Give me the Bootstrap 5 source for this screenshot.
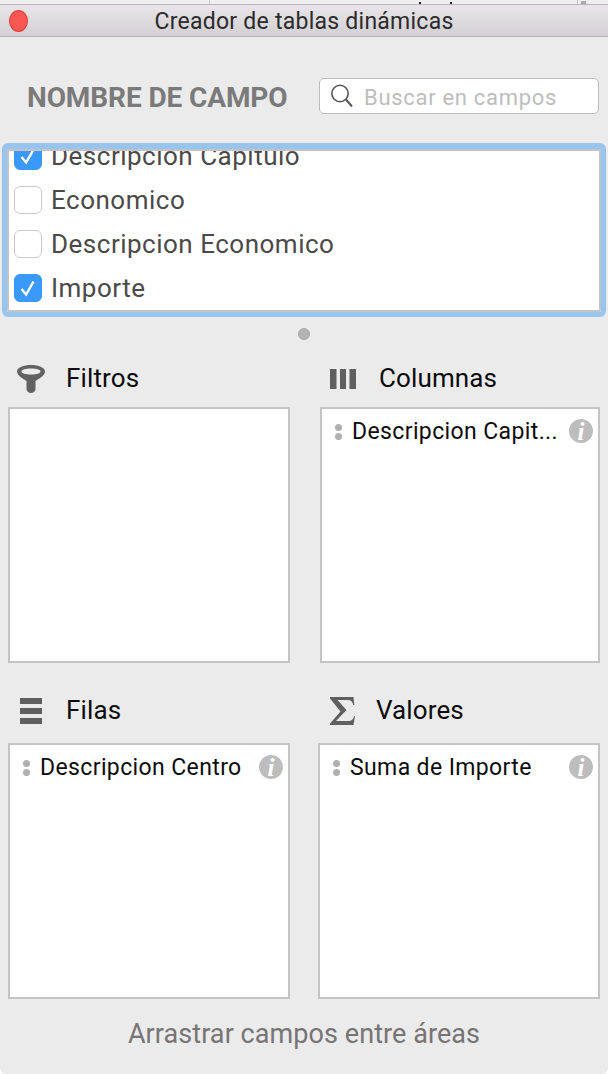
<!DOCTYPE html>
<html lang="es">
<head>
<meta charset="utf-8">
<title>Creador de tablas dinámicas</title>
<link href="https://cdn.jsdelivr.net/npm/bootstrap@5.3.0/dist/css/bootstrap.min.css" rel="stylesheet">
<style>
html,body{width:608px;height:1074px;overflow:hidden;background:#fff;margin:0}
body{font-family:Roboto,"Liberation Sans",sans-serif;-webkit-font-smoothing:antialiased}
.strip{height:5px;border-bottom:1px solid #b5b5b5;background-color:#efefef;background-repeat:no-repeat;
background-image:linear-gradient(#c8c8c8,#c8c8c8),linear-gradient(#c8c8c8,#c8c8c8),linear-gradient(#555,#555),linear-gradient(#222,#222),linear-gradient(#222,#222),linear-gradient(#aaa,#aaa);
background-size:1px 4px,1px 4px,1px 4px,2px 2px,2px 2px,5px 3px;
background-position:209px 0,577px 0,577px 0,419px 2px,450px 2px,581px 1px}
.win{height:1069px;background:#ebebeb;border-radius:0 0 6px 6px}
.tbar{height:32px;background:linear-gradient(#e8e6e8,#d2d0d2);border-bottom:1px solid #b1b1b1;position:relative;font-size:23px;color:#2c2a2c;line-height:33px;letter-spacing:.25px}
.close-dot{position:absolute;left:9px;top:5px;width:19px;height:22px;border-radius:50%;background:#fc5753;border:1px solid #df3f3c}
.head{height:106px;padding:41px 9px 0 27px}
.fname{font-size:28px;font-weight:700;color:#7b7a7b;letter-spacing:-.1px;line-height:38px;padding-top:1px}
.sbox{width:280px;height:36px;background:#fff;border:1px solid #bcbcbc;border-radius:5px;padding-left:10px;gap:10px;font-size:22px;color:#bdbdbd;letter-spacing:.7px}
.stext{padding-top:3px}
.flist{height:174px;margin:0 2px;border:5px solid #9ac4f0;border-top-width:6px;border-radius:6px;overflow:hidden}
.flist-in{height:100%;background:#fff;border:2px solid #c4c4c4;overflow:hidden;padding-left:5px}
.frow{height:44px;gap:9px;font-size:26px;color:#4b4949;letter-spacing:.5px;line-height:44px;white-space:nowrap}
.frow:first-child{margin-top:-17px}
.frow .form-check-input{width:28px;height:28px;margin:0;flex:none;border-radius:6px;border:1.5px solid #cacaca;background-color:#fff;box-shadow:none}
.frow .form-check-input:checked{background-color:#3b99fc;border-color:#3b99fc;background-size:100%;background-image:url("data:image/svg+xml,%3csvg xmlns='http://www.w3.org/2000/svg' viewBox='0 0 28 28'%3e%3cpath fill='none' stroke='%23fff' stroke-width='2.6' d='M7 15l5 6 8-14'/%3e%3c/svg%3e")}
.grip{height:34px}
.grip i{display:block;width:12px;height:12px;border-radius:50%;background:#b4b4b4;border:1px solid #a8a8a8}
.zrow{padding:0 8px;justify-content:space-between}
.zone{width:282px}
.zone.narrow{width:280px}
.zhead{height:56px;font-size:26px;color:#0b0b0b;padding-bottom:1px;letter-spacing:.12px}
.zhead.high{padding-bottom:9px}
.zicon{flex:none;display:block}
.zi-filter{margin:0 21px 0 9px}
.zi-cols{margin:0 23px 0 10px}
.zi-rows{margin:0 24px 0 12px}
.zi-sum{margin:0 21px 0 12px}
.zbox{height:256px;background:#fff;border:2px solid #c4c4c4}
.zitem{height:44px;padding-left:13px;font-size:23px;color:#0b0b0b;letter-spacing:.38px;white-space:nowrap;position:relative;line-height:44px}
.ztext{padding-top:2px}
.dots{flex:none;width:7px;margin-right:10px;display:flex;flex-direction:column;gap:2px;margin-top:1px}
.dots i{display:block;width:7px;height:7px;border-radius:50%;background:#b0b0b0}
.infoi{position:absolute;top:10px;right:5px;width:24px;height:24px;border-radius:50%;background:#bdbdbd;color:#fff;font:italic 700 25px/25px "Liberation Serif",serif;text-align:center;letter-spacing:0}
.gap2{height:24px}
.foot{height:75px;font-size:27px;color:#767474;text-align:center;line-height:70px;letter-spacing:.07px}
</style>
</head>
<body>
<div class="strip"></div>
<div class="win">
  <div class="tbar text-center">
    <span class="close-dot"></span>
    Creador de tablas dinámicas
  </div>
  <div class="head d-flex justify-content-between align-items-start">
    <div class="fname">NOMBRE DE CAMPO</div>
    <div class="sbox d-flex align-items-center">
      <svg width="24" height="26" viewBox="0 0 24 26" fill="none" stroke="#555" class="zicon"><circle cx="10" cy="10.500" r="8.200" stroke-width="1.600"/><path d="M16 16.500l6 7" stroke-width="2"/></svg>
      <span class="stext">Buscar en campos</span>
    </div>
  </div>
  <div class="flist">
    <div class="flist-in">
      <div class="frow d-flex align-items-center"><input class="form-check-input" type="checkbox" checked aria-label="Descripcion Capitulo"><span>Descripcion Capitulo</span></div>
      <div class="frow d-flex align-items-center"><input class="form-check-input" type="checkbox" aria-label="Economico"><span>Economico</span></div>
      <div class="frow d-flex align-items-center"><input class="form-check-input" type="checkbox" aria-label="Descripcion Economico"><span>Descripcion Economico</span></div>
      <div class="frow d-flex align-items-center"><input class="form-check-input" type="checkbox" checked aria-label="Importe"><span>Importe</span></div>
    </div>
  </div>
  <div class="grip d-flex justify-content-center align-items-center"><i></i></div>
  <div class="zrow d-flex">
    <div class="zone">
      <div class="zhead d-flex align-items-center">
        <svg class="zicon zi-filter" width="28" height="28" viewBox="0 0 28 28"><path fill="#626262" fill-rule="evenodd" d="M14 0C6.500 0 0 2.500 0 6.500c0 3.500 4.500 6.500 9.500 9.500v8a4.500 4 0 0 0 9 0v-8c5-3 9.500-6 9.500-9.500C28 2.500 21.500 0 14 0zm0 3.500c5.500 0 9.500 1.200 9.500 3S19.500 9.500 14 9.500 4.500 8.300 4.500 6.500s4-3 9.500-3z"/></svg>
        <span>Filtros</span>
      </div>
      <div class="zbox"></div>
    </div>
    <div class="zone narrow">
      <div class="zhead d-flex align-items-center">
        <svg class="zicon zi-cols" width="26" height="20" viewBox="0 0 26 20" fill="#5f5f5f"><rect width="6.500" height="20"/><rect x="10" width="6" height="20"/><rect x="19.500" width="6.500" height="20"/></svg>
        <span>Columnas</span>
      </div>
      <div class="zbox"><div class="zitem d-flex align-items-center"><span class="dots"><i></i><i></i></span><span class="ztext">Descripcion Capit...</span><span class="infoi">i</span></div></div>
    </div>
  </div>
  <div class="gap2"></div>
  <div class="zrow d-flex">
    <div class="zone">
      <div class="zhead high d-flex align-items-center">
        <svg class="zicon zi-rows" width="22" height="26" viewBox="0 0 22 26" fill="#5f5f5f"><rect width="22" height="6"/><rect y="10" width="22" height="6"/><rect y="20" width="22" height="6"/></svg>
        <span>Filas</span>
      </div>
      <div class="zbox"><div class="zitem d-flex align-items-center"><span class="dots"><i></i><i></i></span><span class="ztext">Descripcion Centro</span><span class="infoi">i</span></div></div>
    </div>
    <div class="zone">
      <div class="zhead high d-flex align-items-center">
        <svg class="zicon zi-sum" width="25" height="28" viewBox="0 0 25 28"><path fill="#5f5f5f" d="M0 0h23.500l.800 8h-1C22.500 4 20.500 3 17 3H7.500l9 10L6 24h12.500c3 0 5-1.500 5.500-5h1L23.500 28H0v-1.500L10.500 14.500 0 1.500z"/></svg>
        <span>Valores</span>
      </div>
      <div class="zbox"><div class="zitem d-flex align-items-center"><span class="dots"><i></i><i></i></span><span class="ztext">Suma de Importe</span><span class="infoi">i</span></div></div>
    </div>
  </div>
  <div class="foot">Arrastrar campos entre áreas</div>
</div>
<script src="https://cdn.jsdelivr.net/npm/bootstrap@5.3.0/dist/js/bootstrap.bundle.min.js"></script>
</body>
</html>
